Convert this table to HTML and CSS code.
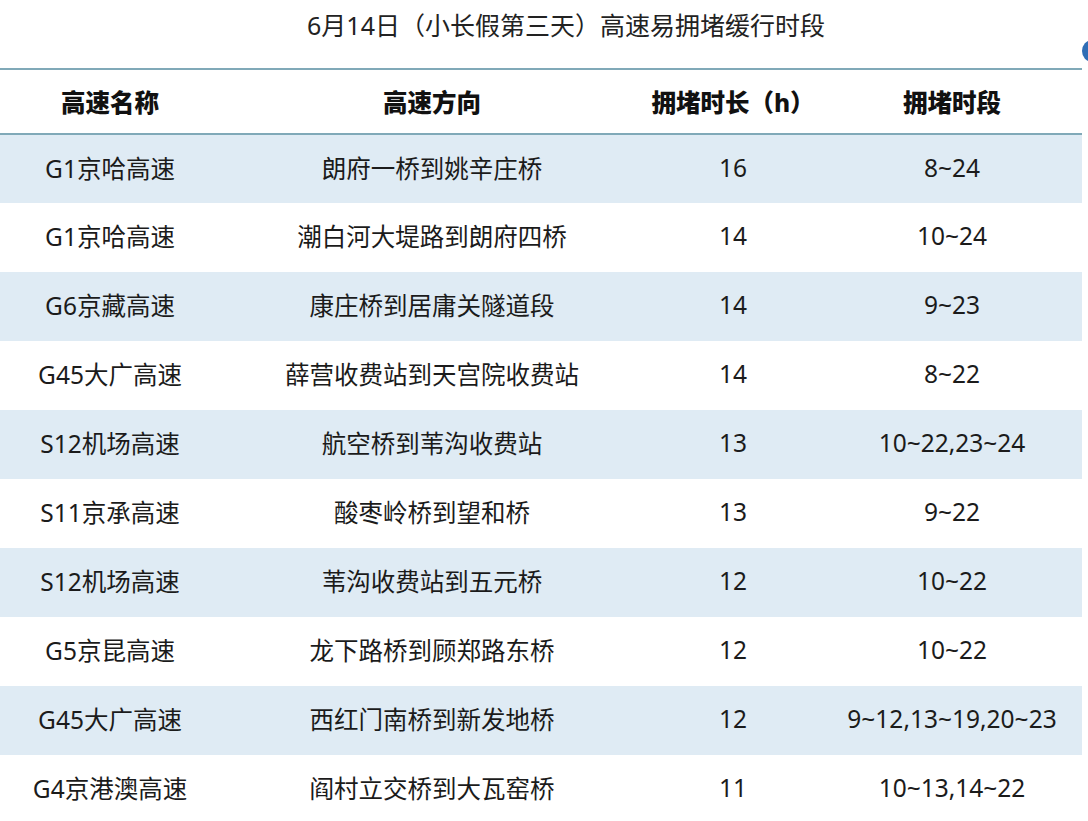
FILE: index.html
```html
<!DOCTYPE html>
<html lang="zh">
<head>
<meta charset="utf-8">
<title>高速易拥堵缓行时段</title>
<link rel="stylesheet" href="styles.css">
</head>
<body>
<div class="page">
  <h1 class="title">6月14日（小长假第三天）高速易拥堵缓行时段</h1>
  <span class="dot"></span>
  <table class="grid">
    <colgroup>
      <col class="c1"><col class="c2"><col class="c3"><col class="c4">
    </colgroup>
    <thead>
      <tr><th>高速名称</th><th>高速方向</th><th>拥堵时长（h）</th><th>拥堵时段</th></tr>
    </thead>
    <tbody>
      <tr><td>G1京哈高速</td><td>朗府一桥到姚辛庄桥</td><td>16</td><td>8~24</td></tr>
      <tr><td>G1京哈高速</td><td>潮白河大堤路到朗府四桥</td><td>14</td><td>10~24</td></tr>
      <tr><td>G6京藏高速</td><td>康庄桥到居庸关隧道段</td><td>14</td><td>9~23</td></tr>
      <tr><td>G45大广高速</td><td>薛营收费站到天宫院收费站</td><td>14</td><td>8~22</td></tr>
      <tr><td>S12机场高速</td><td>航空桥到苇沟收费站</td><td>13</td><td>10~22,23~24</td></tr>
      <tr><td>S11京承高速</td><td>酸枣岭桥到望和桥</td><td>13</td><td>9~22</td></tr>
      <tr><td>S12机场高速</td><td>苇沟收费站到五元桥</td><td>12</td><td>10~22</td></tr>
      <tr><td>G5京昆高速</td><td>龙下路桥到顾郑路东桥</td><td>12</td><td>10~22</td></tr>
      <tr><td>G45大广高速</td><td>西红门南桥到新发地桥</td><td>12</td><td>9~12,13~19,20~23</td></tr>
      <tr><td>G4京港澳高速</td><td>阎村立交桥到大瓦窑桥</td><td>11</td><td>10~13,14~22</td></tr>
    </tbody>
  </table>
</div>
</body>
</html>
```

FILE: styles.css
```css
html, body {
  margin: 0;
  padding: 0;
  background: #ffffff;
}
body {
  font-family: "Noto Sans", "Noto Sans CJK SC", sans-serif;
  color: #1b1b1b;
  overflow: hidden;
}
.page {
  position: relative;
  width: 1088px;
  height: 821px;
  overflow: hidden;
}
.title {
  margin: 0;
  height: 50px;
  line-height: 50px;
  padding-bottom: 18px;
  padding-left: 50px;
  font-size: 25px;
  font-weight: 400;
  text-align: center;
  width: 1032px;
  color: #222;
}
.dot {
  position: absolute;
  left: 1082px;
  top: 40px;
  width: 20px;
  height: 22px;
  border-radius: 50%;
  background: #2f6db5;
}
.grid {
  width: 1082px;
  border-collapse: collapse;
  table-layout: fixed;
  font-size: 24.5px;
}
.c1 { width: 220px; }
.c2 { width: 424px; }
.c3 { width: 178px; }
.c4 { width: 260px; }
.grid thead th {
  height: 63px;
  padding: 0;
  font-weight: 800;
  border-top: 2px solid #80a9b8;
  border-bottom: 2px solid #80a9b8;
  color: #111;
}
.grid tbody tr {
  height: 69px;
}
.grid td {
  padding: 0 0 4px;
  text-align: center;
  white-space: nowrap;
}
.grid tbody tr:nth-child(odd) td {
  background: #dfebf4;
}
```
